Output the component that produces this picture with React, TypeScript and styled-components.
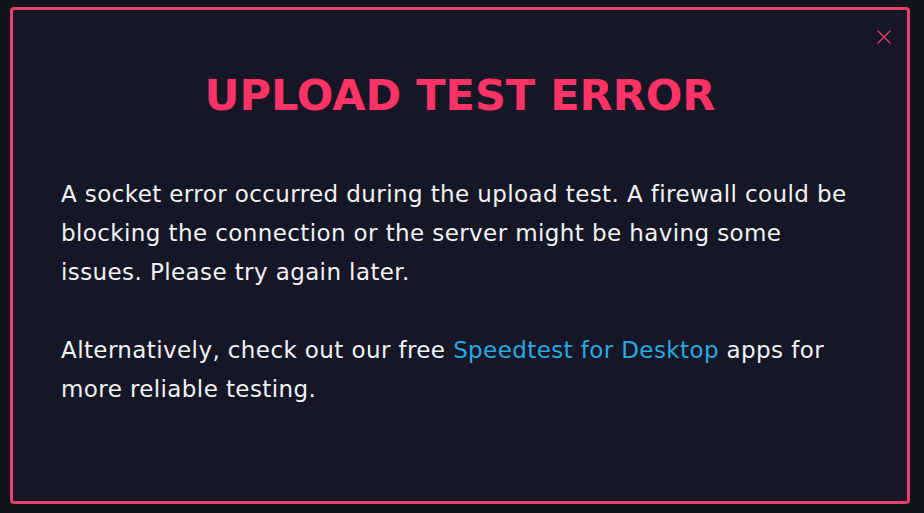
import styled, {createGlobalStyle} from "styled-components";

const GlobalStyle = createGlobalStyle`
  html, body {
    margin: 0;
    padding: 0;
    background: #10121d;
    font-family: "DejaVu Sans", "Liberation Sans", sans-serif;
  }
`;

export default function App() {
  return (
    <>
      <GlobalStyle/>
      <Page>
        <Modal>
          <CloseButton aria-label="Close">
            <svg width="16" height="16" viewBox="0 0 16 16">
              <path d="M1.5 1.5 L14.5 14.5 M14.5 1.5 L1.5 14.5" stroke="#e8406a" strokeWidth="1.3" fill="none"/>
            </svg>
          </CloseButton>
          <Title>UPLOAD TEST ERROR</Title>
          <Body>
            <p>
              A socket error occurred during the upload test. A firewall could be blocking the connection or the
              server might be having some issues. Please try again later.
            </p>
            <p>
              Alternatively, check out our free <Link href="#">Speedtest for Desktop</Link> apps for more reliable
              testing.
            </p>
          </Body>
        </Modal>
      </Page>
    </>
  );
}

const Page = styled.div`
  width: 924px;
  height: 513px;
  padding: 7px 14px 9px 10px;
  box-sizing: border-box;
  display: flex;
`;

const Modal = styled.div`
  position: relative;
  flex: 1;
  background: #151727;
  border: 3px solid #e8406a;
  border-radius: 4px;
  padding: 56px 48px 0 48px;
  display: flex;
  flex-direction: column;
`;

const CloseButton = styled.button`
  position: absolute;
  top: 19px;
  right: 15px;
  background: none;
  border: none;
  padding: 0;
  cursor: pointer;
  display: flex;
`;

const Title = styled.h1`
  margin: 0;
  text-align: center;
  color: #ff3366;
  font-size: 43px;
  font-weight: 700;
  line-height: 58px;
`;

const Body = styled.div`
  margin-top: 51px;
  color: #f2f2f5;
  font-size: 23px;
  letter-spacing: 0.4px;
  line-height: 39px;

  p {
    margin: 0 0 39px 0;
  }
`;

const Link = styled.a`
  color: #2aa8e0;
  text-decoration: none;
`;
